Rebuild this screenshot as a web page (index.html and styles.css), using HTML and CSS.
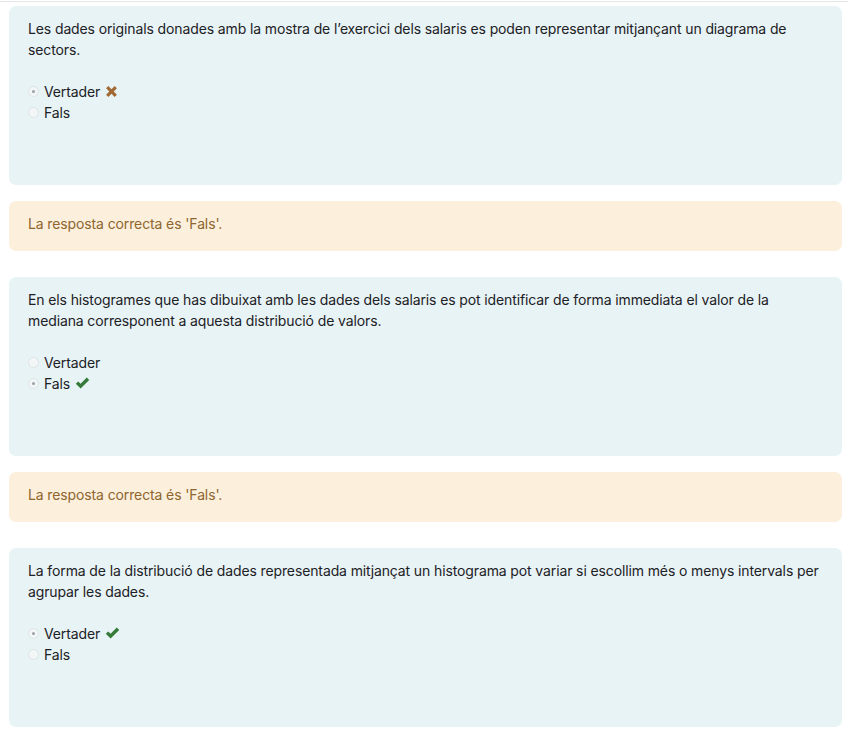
FILE: index.html
```html
<!DOCTYPE html>
<html lang="ca">
<head>
<meta charset="utf-8">
<link rel="stylesheet" href="styles.css">
</head>
<body>
<div class="topline"></div>
<div class="page">
  <div class="que">
    <div class="formulation">
      <div class="qtext">Les dades originals donades amb la mostra de l’exercici dels salaris es poden representar mitjançant un diagrama de sectors.</div>
      <div class="answer">
        <div class="opt"><span class="radio checked"></span><span>Vertader</span>
          <svg class="icon" viewBox="0 0 14 14" width="13" height="13"><path d="M1.2 3.6 L3.6 1.2 L7 4.6 L10.4 1.2 L12.8 3.6 L9.4 7 L12.8 10.4 L10.4 12.8 L7 9.4 L3.6 12.8 L1.2 10.4 L4.6 7 Z" fill="#a26a32"/></svg>
        </div>
        <div class="opt"><span class="radio"></span><span>Fals</span></div>
      </div>
    </div>
    <div class="outcome">La resposta correcta és 'Fals'.</div>
  </div>

  <div class="que">
    <div class="formulation">
      <div class="qtext">En els histogrames que has dibuixat amb les dades dels salaris es pot identificar de forma immediata el valor de la mediana corresponent a aquesta distribució de valors.</div>
      <div class="answer">
        <div class="opt"><span class="radio"></span><span>Vertader</span></div>
        <div class="opt"><span class="radio checked"></span><span>Fals</span>
          <svg class="icon" viewBox="0 0 15 13" width="15" height="13"><path d="M0.8 6.8 L3.2 4.4 L5.6 6.8 L11.8 0.6 L14.2 3 L5.6 11.6 Z" fill="#357a38"/></svg>
        </div>
      </div>
    </div>
    <div class="outcome">La resposta correcta és 'Fals'.</div>
  </div>

  <div class="que">
    <div class="formulation">
      <div class="qtext">La forma de la distribució de dades representada mitjançat un histograma pot variar si escollim més o menys intervals per agrupar les dades.</div>
      <div class="answer">
        <div class="opt"><span class="radio checked"></span><span>Vertader</span>
          <svg class="icon" viewBox="0 0 15 13" width="15" height="13"><path d="M0.8 6.8 L3.2 4.4 L5.6 6.8 L11.8 0.6 L14.2 3 L5.6 11.6 Z" fill="#357a38"/></svg>
        </div>
        <div class="opt"><span class="radio"></span><span>Fals</span></div>
      </div>
    </div>
  </div>
</div>
</body>
</html>
```

FILE: styles.css
```css
html, body {
  margin: 0;
  padding: 0;
  background: #ffffff;
}
body {
  font-family: "Inter", "Liberation Sans", Arial, sans-serif;
  font-size: 14px;
  line-height: 21px;
  letter-spacing: -0.12px;
  color: #1d2125;
}
.topline {
  height: 1px;
  margin-top: 1px;
  background: #e3e7ea;
}
.page {
  padding: 4px 6px 0 9px;
}
.que {
  margin-bottom: 26px;
}
.formulation {
  background: #e7f3f5;
  border-radius: 7px;
  padding: 12px 18px 0 19px;
  height: 167px;
}
.qtext {
  margin-bottom: 21px;
}
.answer {
  display: flex;
  flex-direction: column;
}
.opt {
  display: flex;
  align-items: center;
  height: 21px;
}
.radio {
  width: 11px;
  height: 11px;
  border-radius: 50%;
  background: #f3f6f7;
  border: 1px solid #dde4e6;
  box-sizing: border-box;
  margin: 0 5px 0 0;
  position: relative;
  flex: none;
}
.radio.checked::after {
  content: "";
  position: absolute;
  left: 3px;
  top: 3px;
  width: 3px;
  height: 3px;
  border-radius: 50%;
  background: #9aa0a4;
}
.icon {
  margin-left: 5px;
  flex: none;
}
.outcome {
  margin-top: 16px;
  background: #fcefdc;
  color: #8e662e;
  border-radius: 7px;
  padding: 12px 19px 17px;
}
```
